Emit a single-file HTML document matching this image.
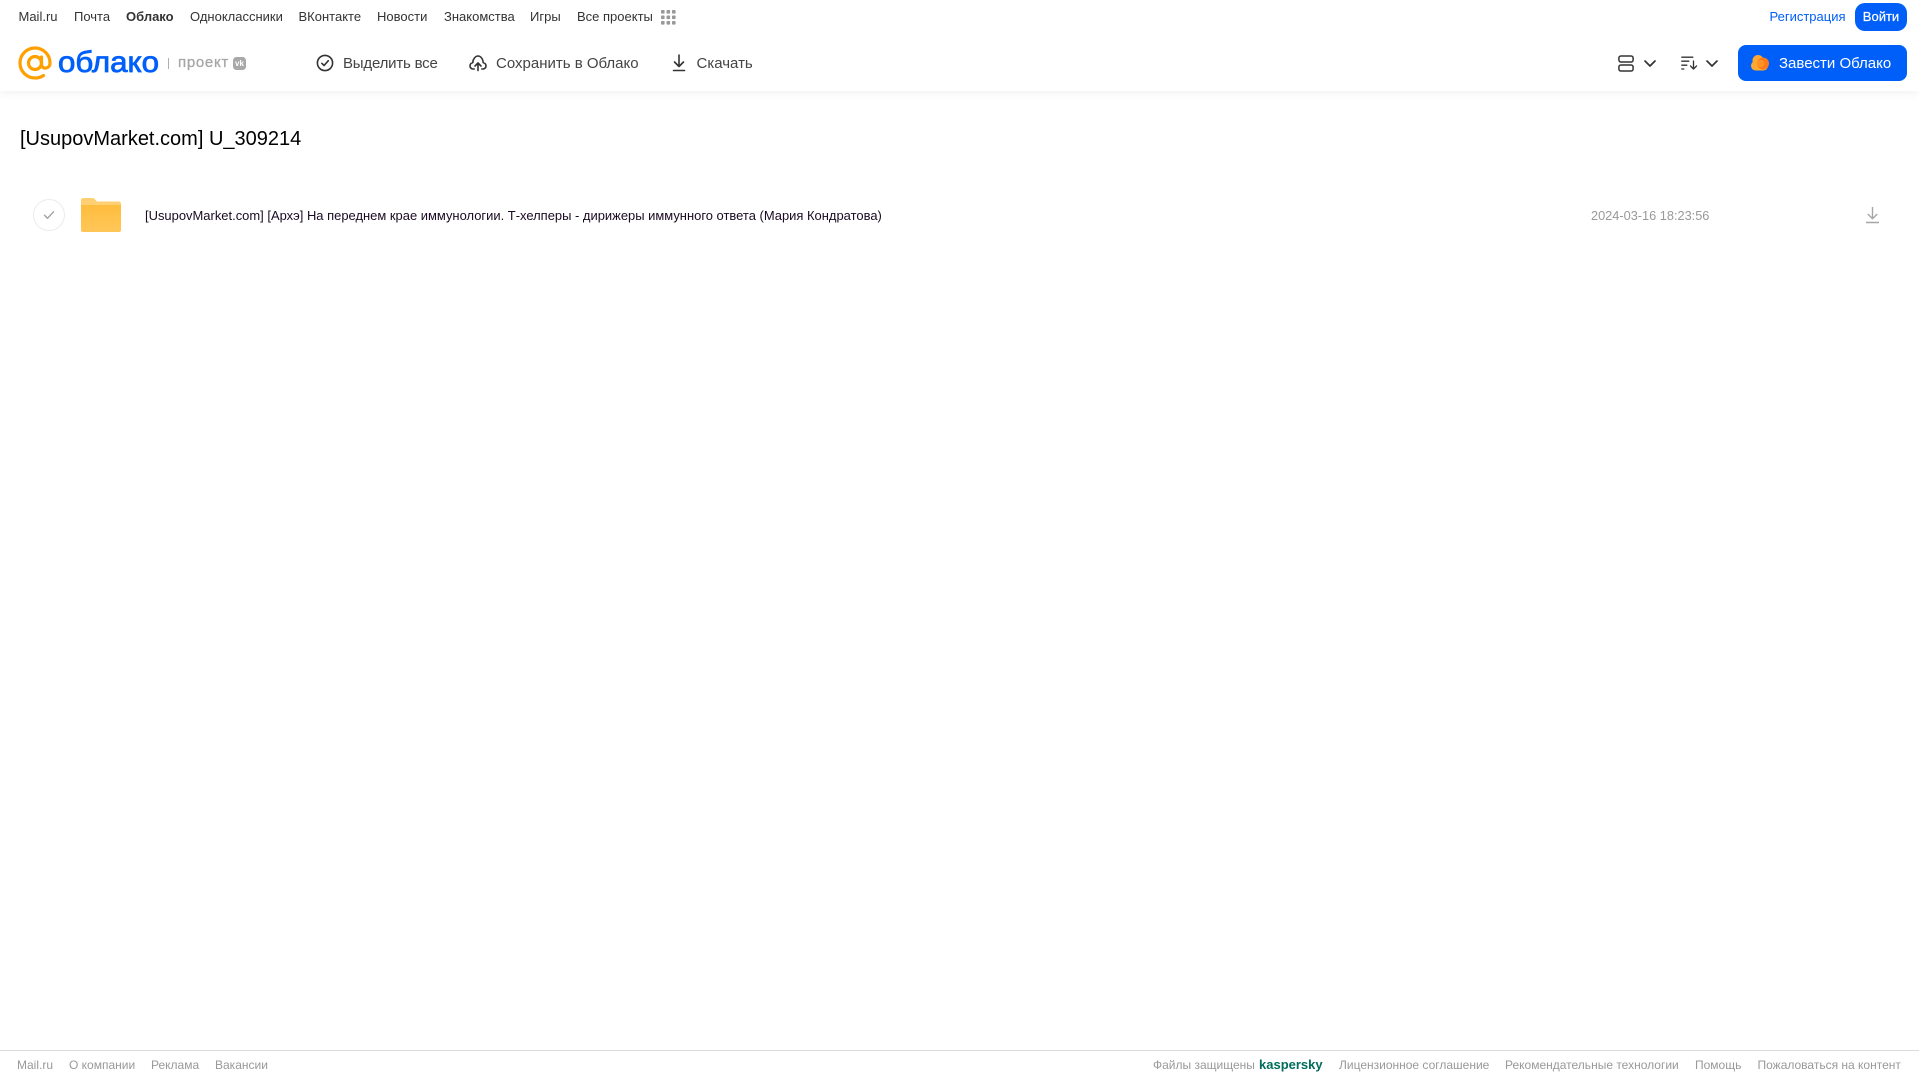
<!DOCTYPE html>
<html lang="ru">
<head>
<meta charset="utf-8">
<title>Облако</title>
<style>
html,body{margin:0;padding:0;background:#fff;width:1919px;height:1079px;overflow:hidden}
body{position:relative;font-family:"Liberation Sans",Arial,sans-serif;color:#333}
.t{position:absolute;white-space:nowrap;line-height:20px}
.n{top:7px;font-size:13px;color:#333}
.a{top:53.500px;font-size:15px;color:#444}
.f{top:1055px;font-size:12px;color:#999}
svg{position:absolute;overflow:visible}
#hdr{position:absolute;left:0;top:0;width:1919px;height:91px;background:#fff;box-shadow:0 1px 10px rgba(0,0,0,.07)}
</style>
</head>
<body>
<div id="hdr"></div>

<span class="t n" style="left:18.500px">Mail.ru</span>
<span class="t n" style="left:74px">Почта</span>
<span class="t n" style="left:126px;font-weight:700">Облако</span>
<span class="t n" style="left:190px">Одноклассники</span>
<span class="t n" style="left:298.500px">ВКонтакте</span>
<span class="t n" style="left:377px">Новости</span>
<span class="t n" style="left:444px">Знакомства</span>
<span class="t n" style="left:530px">Игры</span>
<span class="t n" style="left:577px">Все проекты</span>
<svg style="left:661px;top:10px" width="15" height="15" viewBox="0 0 15 15" fill="#999">
<rect x="0" y="0" width="3.6" height="3.6" rx=".8"/><rect x="5.5" y="0" width="3.6" height="3.6" rx=".8"/><rect x="11" y="0" width="3.6" height="3.6" rx=".8"/>
<rect x="0" y="5.5" width="3.6" height="3.6" rx=".8"/><rect x="5.5" y="5.5" width="3.6" height="3.6" rx=".8"/><rect x="11" y="5.5" width="3.6" height="3.6" rx=".8"/>
<rect x="0" y="11" width="3.6" height="3.6" rx=".8"/><rect x="5.5" y="11" width="3.6" height="3.6" rx=".8"/><rect x="11" y="11" width="3.6" height="3.6" rx=".8"/>
</svg>

<span class="t n" style="left:1769.500px;color:#005ff9">Регистрация</span>
<div style="position:absolute;left:1855px;top:3px;width:52px;height:28px;background:#005ff9;border-radius:10px;color:#fff;font-size:13px;line-height:28px;text-align:center;-webkit-text-stroke:.2px #fff">Войти</div>

<!-- logo -->
<svg style="left:19px;top:46px" width="34" height="34" viewBox="0 0 34 34" fill="none" stroke="#ffa000" stroke-width="3.2" stroke-linecap="round">
<circle cx="16" cy="17" r="6.500"/>
<path d="M22.500 11v7.500c0 5 8.500 5 8.500-1.500C31 8.700 24.300 2 16 2S1 8.700 1 17s6.700 15 15 15c3.200 0 6-.8 8.500-2.500"/>
</svg>
<svg style="left:57.500px;top:42px" width="105" height="40">
<text x="0" y="30" font-family="Liberation Sans, sans-serif" font-size="30" font-weight="400" fill="#005ff9" stroke="#005ff9" stroke-width=".8" textLength="101" lengthAdjust="spacingAndGlyphs">облако</text>
</svg>
<div style="position:absolute;left:168px;top:58px;width:1px;height:11px;background:#b0b0b0"></div>
<span class="t" style="left:178px;top:53px;font-size:15px;color:#a6a6a6;letter-spacing:.7px;-webkit-text-stroke:.3px #a6a6a6">проект</span>
<div style="position:absolute;left:233px;top:57px;width:13px;height:13px;border-radius:3.500px;background:#a8a8a8;color:#fff;font-size:8px;font-weight:700;line-height:13px;text-align:center">vk</div>

<!-- toolbar -->
<svg style="left:316px;top:54px" width="18" height="18" viewBox="0 0 18 18" fill="none" stroke="#333" stroke-width="1.6">
<circle cx="9" cy="9" r="7.6"/><path d="M5.800 9.300l2.300 2.200 4.200-4.800" stroke-linecap="round" stroke-linejoin="round"/>
</svg>
<span class="t a" style="left:343px;letter-spacing:-.2px">Выделить все</span>
<svg style="left:469px;top:54px" width="18" height="18" viewBox="0 0 18 18" fill="none" stroke="#333" stroke-width="1.6" stroke-linecap="round" stroke-linejoin="round">
<path d="M5.200 15H4C2.200 15 1 13.400 1 12c0-1.700 1.100-3 2.800-3.400C3.900 5.300 6.200 2 9 2c2.900 0 5.100 3.300 5.200 6.600 1.700.4 2.800 1.700 2.800 3.400 0 1.400-1.200 3-3 3h-1.200"/>
<path d="M9 16.500V9M6 12l3-3 3 3"/>
</svg>
<span class="t a" style="left:496px">Сохранить в Облако</span>
<svg style="left:671px;top:54px" width="16" height="18" viewBox="0 0 16 18" fill="none" stroke="#333" stroke-width="1.600" stroke-linecap="round" stroke-linejoin="round">
<path d="M8 1v11.500M3.500 8L8 12.500 12.500 8M2.500 16.500h11"/>
</svg>
<span class="t a" style="left:696.500px">Скачать</span>

<svg style="left:1618px;top:55px" width="16" height="17" viewBox="0 0 16 17" fill="none" stroke="#333" stroke-width="1.500">
<rect x=".9" y="1" width="14.200" height="6" rx="2"/><rect x=".9" y="10" width="14.200" height="6" rx="2"/>
</svg>
<svg style="left:1644px;top:60px" width="12" height="7" viewBox="0 0 12 7" fill="none" stroke="#333" stroke-width="1.700" stroke-linecap="round" stroke-linejoin="round"><path d="M1 1l5 5 5-5"/></svg>
<svg style="left:1681px;top:56px" width="17" height="14" viewBox="0 0 17 14" fill="none" stroke="#333" stroke-width="1.300" stroke-linecap="round" stroke-linejoin="round">
<path d="M.8 1.200h11M.8 5.200h7M.8 9.200h5M.8 13h2M12.500 5v8M9.500 10l3 3 3-3"/>
</svg>
<svg style="left:1706px;top:60px" width="12" height="7" viewBox="0 0 12 7" fill="none" stroke="#333" stroke-width="1.700" stroke-linecap="round" stroke-linejoin="round"><path d="M1 1l5 5 5-5"/></svg>

<div style="position:absolute;left:1738px;top:45px;width:169px;height:36px;background:#005ff9;border-radius:8px"></div>
<svg style="left:1751px;top:54px" width="19" height="17" viewBox="0 0 19 17">
<circle cx="7" cy="6.500" r="5.500" fill="#ffa930"/><rect x="0" y="7" width="17" height="9.500" rx="4.700" fill="#ffa930"/>
<circle cx="12" cy="9.500" r="6" fill="#ff7a1a"/>
<circle cx="9.500" cy="9.500" r="3.800" fill="#ff9326"/>
</svg>
<span class="t" style="left:1779px;top:53.500px;font-size:15px;color:#fff">Завести Облако</span>

<!-- title -->
<span class="t" style="left:20px;top:126.500px;font-size:20px;line-height:24px;color:#000">[UsupovMarket.com] U_309214</span>

<!-- row -->
<div style="position:absolute;left:33px;top:199px;width:30px;height:30px;border:1px solid #ececec;border-radius:50%"></div>
<svg style="left:43px;top:210px" width="12" height="10" viewBox="0 0 12 10" fill="none" stroke="#a0a0a0" stroke-width="1.400" stroke-linecap="round" stroke-linejoin="round"><path d="M1.500 5.300l3 3L10.500 1.800"/></svg>
<svg style="left:81px;top:198px" width="40" height="34" viewBox="0 0 40 34">
<defs><linearGradient id="g" x1="0" y1="0" x2="0" y2="1"><stop offset="0" stop-color="#ffbd3f"/><stop offset="1" stop-color="#ffc658"/></linearGradient></defs>
<path d="M2 0h9c1.500 0 2.400.5 3.300 1.600L16 3.500H38c1.100 0 2 .9 2 2V32c0 1.100-.9 2-2 2H2c-1.100 0-2-.9-2-2V2C0 .9.900 0 2 0z" fill="#ffcf73"/>
<path d="M0 7h40v25c0 1.100-.9 2-2 2H2c-1.100 0-2-.9-2-2z" fill="url(#g)"/>
</svg>
<span class="t" style="left:145px;top:206px;font-size:12.960px;color:#1a0a22">[UsupovMarket.com] [Архэ] На переднем крае иммунологии. Т-хелперы - дирижеры иммунного ответа (Мария Кондратова)</span>
<span class="t" style="left:1591px;top:205.500px;font-size:12.750px;color:#999">2024-03-16 18:23:56</span>
<svg style="left:1866px;top:206px" width="13" height="18" viewBox="0 0 13 18" fill="none" stroke="#a6a6a6" stroke-width="1.400" stroke-linejoin="round">
<path d="M6.500 1v11.500M1.800 8l4.700 4.700L11.200 8M0 16.500h13"/>
</svg>

<!-- footer -->
<div style="position:absolute;left:0;top:1050px;width:1919px;height:1px;background:#dcdcdc"></div>
<span class="t f" style="left:17px">Mail.ru</span>
<span class="t f" style="left:69px">О компании</span>
<span class="t f" style="left:151px">Реклама</span>
<span class="t f" style="left:215px">Вакансии</span>
<span class="t f" style="left:1153px">Файлы защищены</span>
<span class="t f" style="left:1259px;color:#006d5c;font-weight:700;font-size:13px">kaspersky</span>
<span class="t f" style="left:1339px">Лицензионное соглашение</span>
<span class="t f" style="left:1505px">Рекомендательные технологии</span>
<span class="t f" style="left:1695px">Помощь</span>
<span class="t f" style="left:1757.500px">Пожаловаться на контент</span>
</body>
</html>
